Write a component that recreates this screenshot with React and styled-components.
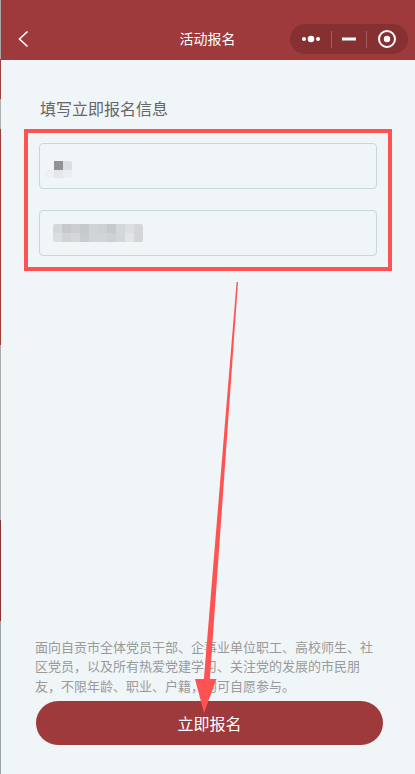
import React from "react";
import styled, { createGlobalStyle } from "styled-components";

const GlobalStyle = createGlobalStyle`
    html, body {
        margin: 0;
        padding: 0;
    }
    body {
        font-family: "Noto Sans CJK SC", "Noto Sans", sans-serif;
        background: #f0f5f8;
    }
`;

const Page = styled.div`
    position: relative;
    height: 774px;
    display: flex;
    flex-direction: column;
    background: #f0f5f8;
    border-left: 1px solid;
    border-image: linear-gradient(
        to bottom,
        #a8a8a8 0 60px,
        #a04040 60px 100px,
        #b0b0b0 100px 130px,
        #a03c3c 130px 345px,
        #aaaaaa 345px 520px,
        #8c3434 520px 620px,
        #9aa4aa 620px 774px
    ) 1;
    overflow: hidden;
`;

const NavBar = styled.div`
    height: 60px;
    box-sizing: border-box;
    padding-top: 18px;
    background: #9e3a3c;
    display: flex;
    align-items: center;
    position: relative;
`;

const Back = styled.div`
    width: 42px;
    height: 42px;
    display: flex;
    align-items: center;
    padding-left: 17px;
    box-sizing: border-box;
`;

const Title = styled.div`
    flex: 1;
    text-align: center;
    color: #fff;
    font-size: 14px;
    margin-left: -42px;
    margin-right: -124px;
    padding-bottom: 3px;
`;

const Capsule = styled.div`
    width: 118px;
    height: 30px;
    margin-left: auto;
    margin-right: 7px;
    border-radius: 15px;
    background: #873032;
    display: flex;
    align-items: center;
    justify-content: space-around;
    box-sizing: border-box;
    padding: 0 6px;
`;

const Divider = styled.span`
    width: 1px;
    height: 17px;
    background: rgba(255, 255, 255, 0.22);
`;

const Main = styled.div`
    flex: 1;
    display: flex;
    flex-direction: column;
    padding: 0 23px;
`;

const FormTitle = styled.div`
    margin: 36px 0 9px 16px;
    font-size: 16px;
    line-height: 24px;
    color: #666;
`;

const MarkBox = styled.div`
    border: 4px solid #ff5252;
    padding: 10px 11px 11px;
    display: flex;
    flex-direction: column;
    gap: 21px;
`;

const Field = styled.div`
    height: 46px;
    box-sizing: border-box;
    border: 1px solid #c8d8d8;
    border-radius: 4px;
    display: flex;
    align-items: center;
    padding-left: ${(p) => p.$pad}px;
`;

const Mosaic = styled.div`
    display: grid;
    grid-template-columns: repeat(${(p) => p.$cols}, 9px);
    grid-auto-rows: 8.7px;
    border-radius: 2px;
    overflow: hidden;
    margin-top: ${(p) => p.$top || 0}px;
`;

const Cell = styled.span`
    background: ${(p) => p.$c};
`;

const Footer = styled.div`
    padding: 0 33px 29px 34px;
    display: flex;
    flex-direction: column;
`;

const Notice = styled.p`
    margin: 0 0 6px;
    width: 340px;
    font-size: 13px;
    line-height: 19.5px;
    color: #9a9a9a;
`;

const SignUp = styled.button`
    height: 44px;
    width: 347px;
    margin-left: 1px;
    border: none;
    border-radius: 22px;
    background: #9e3a3c;
    color: #fff;
    font-family: inherit;
    font-size: 16px;
`;

const Annotation = styled.svg`
    position: absolute;
    left: 0;
    top: 0;
    pointer-events: none;
`;

const nameCells = ["#f3f4f5", "#929294", "#d9dfe4", "#eef1f3", "#e3e7ea", "#ebeef0"];
const phoneCells = [
    "#d5d8d8", "#c5c9ca", "#cbcfd0", "#c5c9ca", "#d0d3d3", "#cdd1d2", "#c5cacb", "#d4d7d8", "#dcdfe0", "#d4d7d8",
    "#dcdede", "#d1d4d5", "#d6d8d8", "#c8cccd", "#d1d4d4", "#d2d5d5", "#cdd1d1", "#d4d7d7", "#e3e5e5", "#d3d6d6",
];

const App = () => {
    return (
        <Page>
            <GlobalStyle />
            <NavBar>
                <Back>
                    <svg width="12" height="18" viewBox="0 0 12 18">
                        <polyline points="9.5,1.5 1.5,9 9.5,16.5" fill="none" stroke="#fff" strokeWidth="1.6" />
                    </svg>
                </Back>
                <Title>活动报名</Title>
                <Capsule>
                    <svg width="20" height="8" viewBox="0 0 20 8">
                        <circle cx="3" cy="4" r="2" fill="#fff" />
                        <circle cx="10" cy="4" r="3.3" fill="#fff" />
                        <circle cx="17" cy="4" r="2" fill="#fff" />
                    </svg>
                    <Divider />
                    <svg width="14" height="4" viewBox="0 0 14 4">
                        <rect x="0" y="0.5" width="14" height="3" fill="#fff" />
                    </svg>
                    <Divider />
                    <svg width="20" height="20" viewBox="0 0 20 20">
                        <circle cx="10" cy="10" r="8" fill="none" stroke="#fff" strokeWidth="2" />
                        <circle cx="10" cy="10" r="3.2" fill="#fff" />
                    </svg>
                </Capsule>
            </NavBar>

            <Main>
                <FormTitle>填写立即报名信息</FormTitle>
                <MarkBox>
                    <Field $pad={5}>
                        <Mosaic $cols={3} $top={7}>
                            {nameCells.map((c, i) => <Cell key={i} $c={c} />)}
                        </Mosaic>
                    </Field>
                    <Field $pad={13}>
                        <Mosaic $cols={10}>
                            {phoneCells.map((c, i) => <Cell key={i} $c={c} />)}
                        </Mosaic>
                    </Field>
                </MarkBox>
            </Main>

            <Footer>
                <Notice>
                    面向自贡市全体党员干部、企事业单位职工、高校师生、社区党员，以及所有热爱党建学习、关注党的发展的市民朋友，不限年龄、职业、户籍，均可自愿参与。
                </Notice>
                <SignUp>立即报名</SignUp>
            </Footer>

            <Annotation width="415" height="774" viewBox="0 0 415 774">
                <polygon points="235.6,282 237,282 208.5,684 202.5,684" fill="#ff5252" />
                <polygon points="194,679 215.5,679 203,713" fill="#ff5252" />
            </Annotation>
        </Page>
    );
};

export default App;
